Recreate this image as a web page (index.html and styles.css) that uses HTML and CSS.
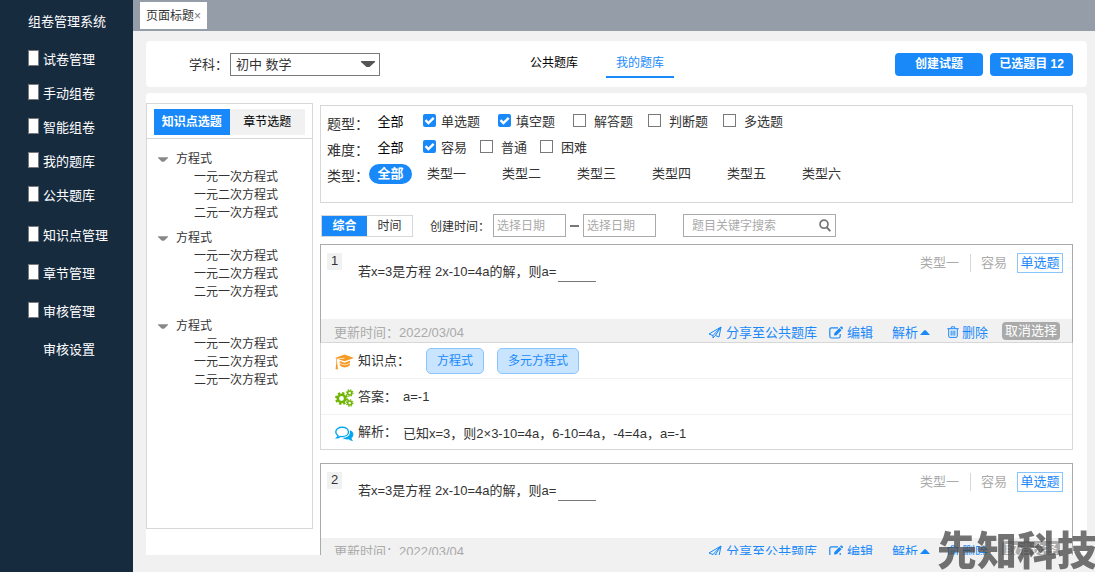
FILE: index.html
```html
<!DOCTYPE html>
<html lang="zh-CN">
<head>
<meta charset="utf-8">
<title>组卷管理系统</title>
<link rel="stylesheet" href="styles.css">
</head>
<body>
<svg class="sprite" aria-hidden="true">
  <symbol id="i-plane" viewBox="0 0 14 13"><path d="M1 8 13 1l-2 10-3.600-1.500M1 8l4 1.500V12l2.200-2.500M5 9.500 13 1 7.400 9.500" fill="none" stroke="currentColor" stroke-width="1" stroke-linejoin="round"/></symbol>
  <symbol id="i-edit" viewBox="0 0 14 13"><path d="M9 1.8H2.6Q.8 1.8.8 3.6v6.6Q.8 12 2.6 12h6.8q1.8 0 1.8-1.8V8" fill="none" stroke="currentColor" stroke-width="1.2"/><path d="M5 9.5 5.4 7l5-5 2.2 2.2-5 5zM11 1.4l.8-.8q.5-.4 1 0l1 1q.4.5 0 1l-.7.8z" fill="currentColor"/></symbol>
  <symbol id="i-trash" viewBox="0 0 12 12"><path d="M.3 2.7h11.4M4 2.5 4.5.8h3L8 2.5M1.7 3v7.2q0 1.2 1.2 1.2h6.2q1.2 0 1.2-1.2V3M4.2 4.6v5M6 4.6v5M7.8 4.6v5" fill="none" stroke="currentColor" stroke-width="1"/></symbol>
  <symbol id="i-up" viewBox="0 0 10 5"><path d="M0 5 4.3.3h1.4L10 5z" fill="currentColor"/></symbol>
  <symbol id="i-down" viewBox="0 0 14 6"><path d="M0 0h14v1L8.500 6h-3L0 1z" fill="currentColor"/></symbol>
  <symbol id="i-search" viewBox="0 0 12 13"><circle cx="5" cy="5.2" r="4" fill="none" stroke="currentColor" stroke-width="1.7"/><path d="m7.8 8.4 3 3.2" stroke="currentColor" stroke-width="2" stroke-linecap="round"/></symbol>
  <symbol id="i-cap" viewBox="0 0 20 17"><path d="M10 .5 20 4.200 10 7.800 3.400 5.500l6.600-.8v-.6L2.200 5v3.800l1 7.200H.6l.8-7V4.600L0 4.200z" fill="currentColor"/><path d="m5 7.400 5 1.800 5.800-2v4.500q-1.800 2.600-5.600 2.600-3.700 0-5.200-2.600z" fill="currentColor"/><path d="M5 9.800q5 3.300 10.800 0" fill="none" stroke="#fff" stroke-width=".7"/></symbol>
  <symbol id="i-cogs" viewBox="0 0 19 18"><g fill="none" stroke="currentColor"><circle cx="6.500" cy="9.500" r="3.700" stroke-width="2.600"/><circle cx="6.500" cy="9.500" r="5.500" stroke-width="2" stroke-dasharray="2.300 2.020"/><circle cx="14.700" cy="4" r="2" stroke-width="1.600"/><circle cx="14.700" cy="4" r="3.200" stroke-width="1.200" stroke-dasharray="1.400 1.110"/><circle cx="14.700" cy="14" r="2" stroke-width="1.600"/><circle cx="14.700" cy="14" r="3.200" stroke-width="1.200" stroke-dasharray="1.400 1.110"/></g></symbol>
  <symbol id="i-chat" viewBox="0 0 19 16"><path d="M7.200 1.200c3.600 0 6.300 2 6.300 4.700s-2.700 4.700-6.300 4.700q-1 0-2-.2-1.400 1.300-3.300 1.400 1-.9 1.100-2.200Q.8 8.300.8 5.900C.8 3.200 3.600 1.200 7.200 1.200z" fill="none" stroke="currentColor" stroke-width="1.400"/><path d="M15 4.300q3.400 1.500 3.400 4.300 0 2.100-1.900 3.400.2 1.600 1.500 2.900-2.600.1-4.400-1.600-3.700.5-6.200-1.300 6.900-.3 7.600-5.300z" fill="currentColor"/></symbol>
</svg>

<nav class="sidebar">
  <h1 class="brand">组卷管理系统</h1>
  <ul class="menu">
    <li class="menu-item"><span class="box"></span><a href="#">试卷管理</a></li>
    <li class="menu-item"><span class="box"></span><a href="#">手动组卷</a></li>
    <li class="menu-item"><span class="box"></span><a href="#">智能组卷</a></li>
    <li class="menu-item"><span class="box"></span><a href="#">我的题库</a></li>
    <li class="menu-item"><span class="box"></span><a href="#">公共题库</a></li>
  </ul>
  <ul class="menu wide">
    <li class="menu-item"><span class="box"></span><a href="#">知识点管理</a></li>
    <li class="menu-item"><span class="box"></span><a href="#">章节管理</a></li>
    <li class="menu-item"><span class="box"></span><a href="#">审核管理</a></li>
    <li class="menu-item sub"><a href="#">审核设置</a></li>
  </ul>
</nav>

<div class="page">
  <div class="tabbar"><button class="page-tab">页面标题<span class="close">×</span></button></div>

  <header class="topbar">
    <label class="subject-label" for="subject">学科：</label>
    <div class="select-wrap">
      <select id="subject" class="subject"><option>初中 数学</option></select>
      <svg class="select-caret"><use href="#i-down"/></svg>
    </div>
    <nav class="bank-tabs">
      <a class="bank-tab" href="#">公共题库</a>
      <a class="bank-tab active" href="#">我的题库</a>
    </nav>
    <div class="top-actions">
      <button class="primary create">创建试题</button>
      <button class="primary chosen">已选题目 12</button>
    </div>
  </header>

  <main class="content">
    <aside class="tree-panel">
      <div class="tree-tabs">
        <button class="tree-tab active">知识点选题</button>
        <button class="tree-tab">章节选题</button>
      </div>
      <div class="tree">
        <section class="group">
          <div class="parent"><svg class="tree-caret"><use href="#i-down"/></svg>方程式</div>
          <ul class="children"><li>一元一次方程式</li><li>一元二次方程式</li><li>二元一次方程式</li></ul>
        </section>
        <section class="group">
          <div class="parent"><svg class="tree-caret"><use href="#i-down"/></svg>方程式</div>
          <ul class="children"><li>一元一次方程式</li><li>一元二次方程式</li><li>二元一次方程式</li></ul>
        </section>
        <section class="group spaced">
          <div class="parent"><svg class="tree-caret"><use href="#i-down"/></svg>方程式</div>
          <ul class="children"><li>一元一次方程式</li><li>一元二次方程式</li><li>二元一次方程式</li></ul>
        </section>
      </div>
    </aside>

    <div class="main-col">
      <section class="filters">
        <div class="filter-row">
          <span class="filter-name">题型：</span><button class="all">全部</button>
          <div class="kinds">
            <label class="check"><input type="checkbox" checked>单选题</label>
            <label class="check"><input type="checkbox" checked>填空题</label>
            <label class="check"><input type="checkbox">解答题</label>
            <label class="check"><input type="checkbox">判断题</label>
            <label class="check"><input type="checkbox">多选题</label>
          </div>
        </div>
        <div class="filter-row">
          <span class="filter-name">难度：</span><button class="all">全部</button>
          <div class="levels">
            <label class="check"><input type="checkbox" checked>容易</label>
            <label class="check"><input type="checkbox">普通</label>
            <label class="check"><input type="checkbox">困难</label>
          </div>
        </div>
        <div class="filter-row">
          <span class="filter-name">类型：</span><button class="all pill">全部</button>
          <div class="types">
            <button class="type">类型一</button><button class="type">类型二</button><button class="type">类型三</button><button class="type">类型四</button><button class="type">类型五</button><button class="type">类型六</button>
          </div>
        </div>
      </section>

      <div class="toolbar">
        <div class="sort"><button class="sort-btn active">综合</button><button class="sort-btn">时间</button></div>
        <label class="date-label" for="from">创建时间：</label>
        <input id="from" class="date" type="text" placeholder="选择日期">
        <span class="dash"></span>
        <input class="date" type="text" placeholder="选择日期" aria-label="结束日期">
        <div class="search">
          <input class="search-input" type="text" placeholder="题目关键字搜索" aria-label="题目关键字搜索">
          <svg class="search-icon"><use href="#i-search"/></svg>
        </div>
      </div>

      <article class="question">
        <div class="q-body">
          <span class="q-no">1</span>
          <p class="q-text">若x=3是方程 2x-10=4a的解，则a=<span class="blank"></span></p>
          <div class="q-tags"><span class="q-type">类型一</span><span class="q-level">容易</span><span class="q-kind">单选题</span></div>
        </div>
        <footer class="q-foot">
          <span class="updated">更新时间：2022/03/04</span>
          <button class="act share"><svg class="icon"><use href="#i-plane"/></svg>分享至公共题库</button>
          <button class="act edit"><svg class="icon"><use href="#i-edit"/></svg>编辑</button>
          <button class="act explain">解析<svg class="up"><use href="#i-up"/></svg></button>
          <button class="act remove"><svg class="trash"><use href="#i-trash"/></svg>删除</button>
          <button class="cancel">取消选择</button>
        </footer>
      </article>
      <section class="detail">
        <div class="d-row"><svg class="d-icon orange"><use href="#i-cap"/></svg><span class="d-name long">知识点：</span><span class="chip">方程式</span><span class="chip">多元方程式</span></div>
        <div class="d-row"><svg class="d-icon green"><use href="#i-cogs"/></svg><span class="d-name">答案：</span><span class="d-value">a=-1</span></div>
        <div class="d-row"><svg class="d-icon blue"><use href="#i-chat"/></svg><span class="d-name">解析：</span><span class="d-value low">已知x=3，则2×3-10=4a，6-10=4a，-4=4a，a=-1</span></div>
      </section>

      <article class="question">
        <div class="q-body">
          <span class="q-no">2</span>
          <p class="q-text">若x=3是方程 2x-10=4a的解，则a=<span class="blank"></span></p>
          <div class="q-tags"><span class="q-type">类型一</span><span class="q-level">容易</span><span class="q-kind">单选题</span></div>
        </div>
        <footer class="q-foot">
          <span class="updated">更新时间：2022/03/04</span>
          <button class="act share"><svg class="icon"><use href="#i-plane"/></svg>分享至公共题库</button>
          <button class="act edit"><svg class="icon"><use href="#i-edit"/></svg>编辑</button>
          <button class="act explain">解析<svg class="up"><use href="#i-up"/></svg></button>
          <button class="act remove"><svg class="trash"><use href="#i-trash"/></svg>删除</button>
          <button class="cancel">取消选择</button>
        </footer>
      </article>
    </div>
  </main>
</div>
<div class="watermark">先知科技</div>
</body>
</html>
```
FILE: styles.css
```css
* { box-sizing: border-box; }
body {
  margin: 0;
  height: 100vh;
  display: flex;
  overflow: hidden;
  background: #f1f1f1;
  color: #333;
  font: 13px/18px "Liberation Sans", "Noto Sans CJK SC", sans-serif;
}
button, input, select { font: inherit; color: inherit; margin: 0; padding: 0; }
button { border: 0; background: none; white-space: nowrap; }
a { color: inherit; text-decoration: none; }
ul { list-style: none; margin: 0; padding: 0; }
svg { flex: none; }
.sprite { position: absolute; width: 0; height: 0; }

/* sidebar */
.sidebar { flex: none; width: 133px; padding: 13px 0 0 28px; background: #172b3f; color: #fff; }
.brand { margin: 0 0 12px; font-size: 13px; font-weight: 400; line-height: 18px; }
.menu-item { display: flex; align-items: center; gap: 4px; height: 34px; }
.menu.wide { padding-top: 4px; }
.menu.wide .menu-item { height: 38px; }
.menu-item.sub { padding-left: 15px; }
.box { width: 11px; height: 16px; margin-bottom: 4px; border: 1px solid #797979; background: #fff; }

/* page frame */
.page { flex: 1; min-width: 0; display: flex; flex-direction: column; }
.tabbar { flex: none; height: 31px; padding: 2px 7px; background: #959da8; }
.page-tab { height: 27px; padding: 0 6px; background: #fff; font-size: 12px; }
.close { color: #777; }
.topbar {
  flex: none; display: flex; align-items: center; height: 46px;
  margin: 10px 8px 6px 13px; padding: 0 14px 0 43px;
  border-radius: 4px; background: #fff;
}
.subject-label { width: 41px; padding-top: 2px; white-space: nowrap; }
.select-wrap { position: relative; width: 150px; }
.subject {
  display: block; width: 100%; height: 23px; padding: 2px 0 0 5px;
  border: 1px solid #797979; border-radius: 0; background: #fff; appearance: none;
}
.select-caret { position: absolute; right: 5px; top: 8px; width: 14px; height: 6px; color: #555; pointer-events: none; }
.bank-tabs { display: flex; gap: 18px; margin-left: 140px; font-size: 12px; color: #000; }
.bank-tab { width: 68px; height: 28px; line-height: 26px; text-align: center; border-bottom: 2px solid transparent; }
.bank-tab.active { color: #1989fa; border-color: #1989fa; }
.top-actions { display: flex; gap: 7px; margin-left: auto; }
.primary { height: 23px; border-radius: 4px; background: #1989fa; color: #fff; font-size: 12px; font-weight: 700; }
.create { width: 88px; }
.chosen { width: 83px; }

.content {
  flex: 1; min-height: 0; display: flex; gap: 7px; overflow: hidden;
  margin: 0 8px 17px 13px; padding-right: 14px;
  border-radius: 4px 4px 0 0; background: #fff;
}

/* knowledge tree */
.tree-panel { flex: none; width: 167px; margin: 10px 0 26px; border: 1px solid #d7d7d7; font-size: 12px; }
.tree-tabs { display: flex; padding: 5px 7px 3px; border-bottom: 1px solid #d7d7d7; }
.tree-tab { flex: 1; height: 26px; background: #f1f1f1; color: #000; }
.tree-tab.active { background: #1989fa; color: #fff; font-weight: 700; }
.tree { padding: 11px 0 0 11px; }
.group { margin-bottom: 7px; }
.group.spaced { margin-top: 16px; }
.parent { display: flex; align-items: center; gap: 8px; }
.tree-caret { width: 10px; height: 5px; color: #888; }
.children { padding-left: 36px; }

/* filters */
.main-col { flex: 1; min-width: 0; padding-top: 12px; }
.filters { height: 98px; padding: 3px 6px; border: 1px solid #d7d7d7; }
.filter-row { display: flex; align-items: center; height: 26px; }
.filter-name { width: 42px; padding-top: 3px; font-size: 14px; white-space: nowrap; }
.all { width: 43px; height: 20px; color: #000; line-height: 20px; }
.all.pill { border-radius: 10px; background: #1989fa; color: #fff; font-weight: 700; }
.kinds, .levels { display: flex; padding-left: 11px; }
.kinds .check { width: 75px; }
.levels { gap: 13px; }
.types { display: flex; gap: 36px; padding-left: 15px; }
.check { display: flex; align-items: center; gap: 8px; white-space: nowrap; }
.check input { appearance: none; width: 13px; height: 13px; margin-bottom: 3px; border: 1px solid #797979; background: #fff; }
.check input:checked {
  border: 0; border-radius: 2px; margin-right: -3px;
  background: #1989fa url("data:image/svg+xml,%3Csvg xmlns='http://www.w3.org/2000/svg' viewBox='0 0 13 13'%3E%3Cpath d='M2.500 6.200l2.900 2.900 5.300-5.300' fill='none' stroke='white' stroke-width='2.400'/%3E%3C/svg%3E");
}

/* sort and search */
.toolbar { display: flex; align-items: center; margin: 11px 0 7px 1px; font-size: 12px; }
.sort { display: flex; width: 92px; height: 22px; border: 1px solid #d7d7d7; }
.sort-btn { flex: 1; }
.sort-btn.active { background: #1989fa; color: #fff; font-weight: 700; }
.date-label { width: 80px; padding: 2px 0 0 17px; white-space: nowrap; }
.date, .search { height: 23px; border: 1px solid #aaa; background: #fff; }
.date { width: 73px; padding: 0 3px; }
.dash { width: 9px; height: 2px; margin: 0 4px; background: #777; }
input::placeholder { color: #aaa; opacity: 1; }
.search { display: flex; align-items: center; width: 153px; margin-left: 27px; padding: 0 4px 0 8px; }
.search-input { flex: 1; min-width: 0; border: 0; outline: 0; background: none; }
.search-icon { width: 12px; height: 13px; color: #777; }

/* questions */
.question { border: 1px solid #aaa; border-bottom-color: #d7d7d7; }
.q-body { display: flex; align-items: flex-start; height: 74px; padding: 8px 9px 0 6px; }
.q-no { width: 15px; height: 17px; line-height: 16px; text-align: center; background: #f1f1f1; }
.q-text { margin: 10px 0 0 16px; }
.blank { display: inline-block; width: 38px; height: 1px; margin-left: 2px; vertical-align: -6px; background: #777; }
.q-tags { display: flex; align-items: center; margin-left: auto; color: #aaa; }
.q-type { padding-right: 11px; border-right: 1px solid #d7d7d7; }
.q-level { padding: 0 10px; }
.q-kind { width: 46px; border: 1px solid #8ac4fc; color: #1989fa; text-align: center; }
.q-foot { display: flex; align-items: center; height: 23px; padding: 0 12px 0 13px; background: #f1f1f1; }
.updated { margin-right: auto; padding-top: 5px; color: #aaa; }
.act { display: flex; align-items: center; gap: 4px; padding-top: 5px; color: #1989fa; }
.icon { width: 14px; height: 13px; margin-bottom: 2px; }
.up { width: 10px; height: 5px; margin-bottom: 2px; }
.trash { width: 12px; height: 12px; margin-bottom: 2px; }
.edit { margin-left: 12px; }
.explain { gap: 2px; margin-left: 19px; }
.remove { gap: 3px; margin-left: 17px; }
.cancel { width: 58px; height: 18px; margin-left: 14px; border-radius: 4px; background: #aaa; color: #fff; line-height: 18px; }

/* answer detail */
.detail { margin-bottom: 13px; border: 1px solid #d7d7d7; border-top: 0; }
.d-row { display: flex; align-items: center; height: 36px; padding-left: 14px; border-bottom: 1px solid #f1f1f1; }
.d-row:last-child { height: 34px; border-bottom: 0; }
.d-icon { width: 19px; height: 18px; margin: 3px 4px 0 0; }
.orange { color: #f59a23; }
.green { color: #70b603; }
.blue { color: #02a7f0; }
.d-name { width: 45px; white-space: nowrap; }
.d-name.long { width: 68px; }
.d-value.low { padding-top: 3px; }
.chip { padding: 3px 10px; margin-right: 13px; border: 1px solid #8ac4fc; border-radius: 5px; background: #c9e4ff; color: #1989fa; font-size: 12px; line-height: 18px; }

.watermark {
  position: fixed; right: -2px; bottom: 4px; opacity: .75; color: #444;
  font-family: "Noto Sans CJK SC", sans-serif; font-size: 40px; font-weight: 900; line-height: 40px;
  pointer-events: none;
}
```
